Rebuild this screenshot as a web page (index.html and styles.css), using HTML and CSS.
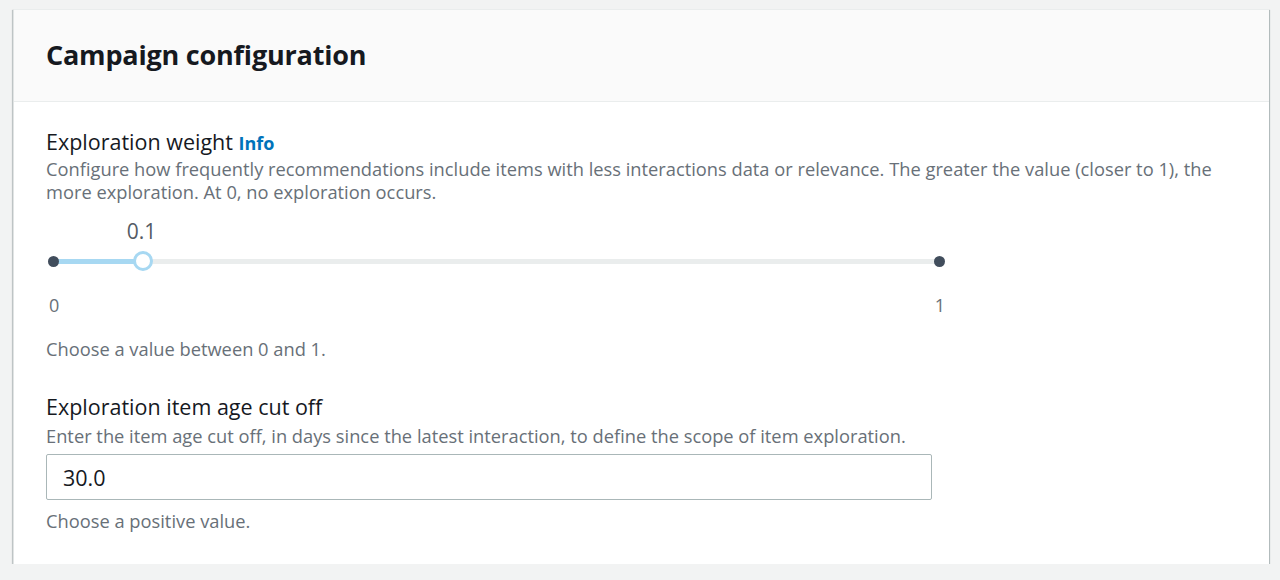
FILE: index.html
```html
<!DOCTYPE html>
<html lang="en">
<head>
<meta charset="utf-8">
<title>Campaign configuration</title>
<link rel="stylesheet" href="styles.css">
</head>
<body>
<section class="card">
  <header class="card-header">
    <h2 class="card-title">Campaign configuration</h2>
  </header>
  <div class="card-body">
    <div class="field">
      <div class="field-label">Exploration weight <a class="info" href="#">Info</a></div>
      <div class="field-desc">Configure how frequently recommendations include items with less interactions data or relevance. The greater the value (closer to 1), the more exploration. At 0, no exploration occurs.</div>
      <div class="slider">
        <div class="slider-value-row">
          <span class="slider-value" style="left: 10%">0.1</span>
        </div>
        <div class="slider-track-wrap">
          <div class="slider-track">
            <div class="slider-fill" style="width: 10%"></div>
            <span class="slider-dot dot-start"></span>
            <span class="slider-dot dot-end"></span>
            <span class="slider-thumb" style="left: 10%"></span>
          </div>
        </div>
        <div class="slider-ends">
          <span>0</span>
          <span>1</span>
        </div>
      </div>
      <div class="field-hint hint-slider">Choose a value between 0 and 1.</div>
    </div>
    <div class="field field-second">
      <div class="field-label">Exploration item age cut off</div>
      <div class="field-desc desc-second">Enter the item age cut off, in days since the latest interaction, to define the scope of item exploration.</div>
      <input class="text-input" type="text" value="30.0">
      <div class="field-hint hint-input">Choose a positive value.</div>
    </div>
  </div>
</section>
</body>
</html>
```

FILE: styles.css
```css
* { box-sizing: border-box; }
html, body {
  margin: 0;
  background: #f2f3f3;
}
body {
  padding: 9px 11px 0 13px;
  font-family: "Open Sans", "Noto Sans", sans-serif;
  color: #16191f;
}
.card {
  background: #ffffff;
  border-top: 1px solid #eaeded;
  border-left: 1px solid #e1e4e4;
  box-shadow: 0 1px 1px 0 rgba(0, 28, 36, 0.45), 1px 1px 1px 0 rgba(0, 28, 36, 0.2), -1px 1px 1px 0 rgba(0, 28, 36, 0.15);
}
.card-header {
  background: #fafafa;
  border-bottom: 1px solid #eaeded;
  height: 92px;
  display: flex;
  align-items: center;
  padding: 0 32px;
}
.card-title {
  margin: 0;
  font-size: 27px;
  font-weight: 700;
  letter-spacing: -0.2px;
  color: #16191f;
  padding-bottom: 2px;
}
.card-body {
  padding: 27px 32px 32px 32px;
}
.field-label {
  font-size: 21.5px;
  line-height: 26px;
  color: #16191f;
}
.info {
  color: #0073bb;
  font-weight: 700;
  font-size: 18px;
  text-decoration: none;
}
.field-desc {
  font-size: 18.3px;
  line-height: 23px;
  color: #687078;
  margin-top: 1px;
}
.desc-second {
  margin-top: 4px;
}
.slider {
  width: 900px;
  margin-top: 16px;
}
.slider-value-row {
  position: relative;
  height: 24px;
  margin: 0 7px;
}
.slider-value {
  position: absolute;
  top: 0;
  transform: translateX(-50%);
  margin-left: 0;
  font-size: 21px;
  line-height: 24px;
  color: #545b64;
}
.slider-track-wrap {
  padding: 0 7px;
  height: 22px;
  display: flex;
  align-items: center;
  margin-top: 7px;
}
.slider-track {
  position: relative;
  width: 100%;
  height: 5px;
  background: #eaeded;
  border-radius: 3px;
}
.slider-fill {
  position: absolute;
  left: 0;
  top: 0;
  height: 5px;
  background: #a7d8f2;
}
.slider-dot {
  position: absolute;
  top: 50%;
  width: 11px;
  height: 11px;
  margin-top: -5.5px;
  margin-left: -5.5px;
  border-radius: 50%;
  background: #414d5c;
}
.dot-start { left: 0; }
.dot-end { left: 100%; }
.slider-thumb {
  position: absolute;
  top: 50%;
  width: 20px;
  height: 20px;
  margin-top: -10px;
  margin-left: -9px;
  border-radius: 50%;
  background: #ffffff;
  border: 3px solid #a7d8f2;
}
.slider-ends {
  display: flex;
  justify-content: space-between;
  padding: 0 2px 0 3px;
  margin-top: 22px;
  font-size: 18px;
  line-height: 22px;
  color: #687078;
}
.slider-ends span:last-child {
  margin-right: -1px;
}
.field-hint {
  font-size: 18.3px;
  line-height: 23px;
  color: #687078;
}
.hint-slider {
  margin-top: 21px;
}
.field-second {
  margin-top: 34px;
}
.text-input {
  display: block;
  width: 886px;
  height: 46px;
  margin-top: 7px;
  padding: 0 16px;
  border: 1px solid #aab7b8;
  border-radius: 2px;
  font-family: "Open Sans", "Noto Sans", sans-serif;
  font-size: 21.5px;
  color: #16191f;
  background: #ffffff;
  outline: none;
}
.hint-input {
  margin-top: 9px;
}
```
